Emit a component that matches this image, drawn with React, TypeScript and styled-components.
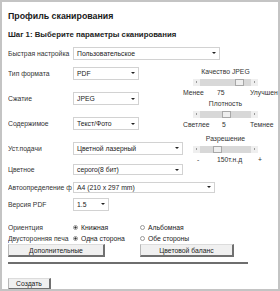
import React from "react";
import styled, { createGlobalStyle } from "styled-components";

const Global = createGlobalStyle`
  html, body { margin: 0; padding: 0; background: #fff; }
  body { font-family: "Liberation Sans", Arial, sans-serif; }
`;

const Page = styled.div`
  width: 280px;
  height: 291px;
  box-sizing: border-box;
  border: 2px solid #c4c4c4;
  padding: 6px 0 0 6px;
  overflow: hidden;
  color: #333;
  font-size: 6.8px;
`;

const Title = styled.div`
  font-size: 8.8px;
  font-weight: bold;
  color: #1a1a1a;
  line-height: 16px;
`;

const Step = styled.div`
  margin-top: 5px;
  font-size: 7.8px;
  font-weight: bold;
  color: #222;
  line-height: 12px;
`;

const Row = styled.div<{ $h: number; $mt?: number }>`
  display: flex;
  align-items: center;
  height: ${(p) => p.$h}px;
  margin-top: ${(p) => p.$mt ?? 0}px;
`;

const Label = styled.div`
  width: 65px;
  flex: none;
  white-space: nowrap;
  overflow: hidden;
  line-height: 9px;
`;

const SelectBox = styled.div<{ $w: number; $h?: number }>`
  box-sizing: border-box;
  width: ${(p) => p.$w}px;
  height: ${(p) => p.$h ?? 13}px;
  border: 1px solid #d2d2d2;
  background: #fff;
  display: flex;
  align-items: center;
  justify-content: space-between;
  padding: 0 3px 0 3px;
  white-space: nowrap;
  color: #222;
`;

const Arrow = styled.span`
  width: 0;
  height: 0;
  border-left: 2px solid transparent;
  border-right: 2px solid transparent;
  border-top: 2.5px solid #222;
`;

const Block = styled.div`
  display: flex;
`;

const LeftCol = styled.div`
  width: 175px;
  flex: none;
`;

const RightCol = styled.div`
  display: flex;
  flex-direction: column;
  padding-top: 6px;
`;

const SliderGroup = styled.div<{ $mt?: number }>`
  display: grid;
  grid-template-columns: 34px 33px 26px;
  grid-template-rows: 11px 10px 11px;
  align-items: center;
  width: 93px;
  margin-top: ${(p) => p.$mt ?? 0}px;
`;

const SliderTitle = styled.div`
  grid-column: 1 / 4;
  white-space: nowrap;
  text-align: center;
  width: 65px;
  margin-left: 10px;
`;

const SliderTrackCell = styled.div`
  grid-column: 1 / 4;
  display: flex;
  padding-left: 10px;
`;

const Track = styled.div`
  position: relative;
  width: 65px;
  height: 7px;
  background-color: #d8d8d8;
  background-image: radial-gradient(#c2c2c2 0.5px, transparent 0.6px);
  background-size: 2px 2px;
  display: flex;
  justify-content: space-between;
  align-items: center;
`;

const TrackBtn = styled.div<{ $dir: "l" | "r" }>`
  width: 7px;
  height: 7px;
  background: #efefef;
  display: flex;
  align-items: center;
  justify-content: center;
  &::after {
    content: "";
    width: 0;
    height: 0;
    border-top: 1.5px solid transparent;
    border-bottom: 1.5px solid transparent;
    ${(p) =>
      p.$dir === "l"
        ? "border-right: 1.5px solid #444;"
        : "border-left: 1.5px solid #444;"}
  }
`;

const Thumb = styled.div`
  position: absolute;
  top: 0;
  width: 9px;
  height: 7px;
  box-sizing: border-box;
  background: #eeeeee;
  border: 1px solid #a8a8a8;
`;

const Val = styled.div<{ $pad?: number }>`
  white-space: nowrap;
  padding-left: ${(p) => p.$pad ?? 0}px;
`;

const Radio = styled.span<{ $on?: boolean }>`
  display: inline-block;
  box-sizing: border-box;
  width: 5px;
  height: 5px;
  border-radius: 50%;
  border: 1px solid #999;
  background: ${(p) => (p.$on ? "radial-gradient(#333 0.9px, #fff 1.2px)" : "#fff")};
  margin-right: 3px;
  flex: none;
`;

const RadioOpt = styled.div`
  width: 67px;
  display: flex;
  align-items: center;
  white-space: nowrap;
  color: #222;
`;

const ButtonRow = styled.div`
  display: flex;
  gap: 35px;
  margin-top: 1px;
`;

const Button = styled.div<{ $w: number; $h: number }>`
  box-sizing: border-box;
  width: ${(p) => p.$w}px;
  height: ${(p) => p.$h}px;
  background: #f0f0f0;
  border-left: 1px solid #b8b8b8;
  border-top: 1px solid #dcdcdc;
  border-right: 2px solid #707070;
  border-bottom: 2px solid #707070;
  display: flex;
  align-items: center;
  justify-content: center;
  color: #222;
`;

const Rule = styled.div`
  width: 240px;
  height: 2px;
  background: #6e6e6e;
  margin: 5px 0 14px;
`;

function Select({ w, text, h }: { w: number; text: string; h?: number }) {
  return (
    <SelectBox $w={w} $h={h}>
      <span>{text}</span>
      <Arrow />
    </SelectBox>
  );
}

type Vals = [string, number][];

function Slider({
  title,
  pos,
  vals,
  mt,
}: {
  title: string;
  pos: number;
  vals: Vals;
  mt?: number;
}) {
  return (
    <SliderGroup $mt={mt}>
      <SliderTitle>{title}</SliderTitle>
      <SliderTrackCell>
        <Track>
          <TrackBtn $dir="l" />
          <Thumb style={{ left: pos }} />
          <TrackBtn $dir="r" />
        </Track>
      </SliderTrackCell>
      {vals.map(([t, pad], i) => (
        <Val key={i} $pad={pad}>
          {t}
        </Val>
      ))}
    </SliderGroup>
  );
}

export default function App() {
  return (
    <>
      <Global />
      <Page>
        <Title>Профиль сканирования</Title>
        <Step>Шаг 1: Выберите параметры сканирования</Step>
        <Row $h={14} $mt={5}>
          <Label>Быстрая настройка</Label>
          <Select w={147} text="Пользовательское" />
        </Row>
        <Block>
          <LeftCol>
            <Row $h={26}>
              <Label>Тип формата</Label>
              <Select w={66} text="PDF" />
            </Row>
            <Row $h={25}>
              <Label>Сжатие</Label>
              <Select w={66} text="JPEG" />
            </Row>
            <Row $h={25}>
              <Label>Содержимое</Label>
              <Select w={66} text="Текст/Фото" />
            </Row>
            <Row $h={24}>
              <Label>Уст.подачи</Label>
              <Select w={115} text="Цветной лазерный" />
            </Row>
            <Row $h={19}>
              <Label>Цветное</Label>
              <Select w={117} text="серого(8 бит)" h={11} />
            </Row>
          </LeftCol>
          <RightCol>
            <Slider
              title="Качество JPEG"
              pos={42}
              vals={[
                ["Менее", 0],
                ["75", 0],
                ["Улучшен", 0],
              ]}
            />
            <Slider
              title="Плотность"
              pos={29}
              vals={[
                ["Светлее", 0],
                ["5", 5],
                ["Темнее", 0],
              ]}
            />
            <Slider
              title="Разрешение"
              pos={20}
              mt={3}
              vals={[
                ["-", 14],
                ["150т.н.д", 0],
                ["+", 8],
              ]}
            />
          </RightCol>
        </Block>
        <Row $h={16}>
          <Label>Автоопределение ф</Label>
          <Select w={142} text="A4 (210 x 297 mm)" h={11} />
        </Row>
        <Row $h={18}>
          <Label>Версия PDF</Label>
          <Select w={36} text="1.5" />
        </Row>
        <Row $h={12} $mt={8}>
          <Label>Ориентция</Label>
          <RadioOpt>
            <Radio $on />
            Книжная
          </RadioOpt>
          <RadioOpt>
            <Radio />
            Альбомная
          </RadioOpt>
        </Row>
        <Row $h={10}>
          <Label>Двусторонняя печа</Label>
          <RadioOpt>
            <Radio $on />
            Одна сторона
          </RadioOpt>
          <RadioOpt>
            <Radio />
            Обе стороны
          </RadioOpt>
        </Row>
        <ButtonRow>
          <Button $w={97} $h={13}>
            Дополнительные
          </Button>
          <Button $w={94} $h={13}>
            Цветовой баланс
          </Button>
        </ButtonRow>
        <Rule />
        <Button $w={43} $h={12}>
          Создать
        </Button>
      </Page>
    </>
  );
}
